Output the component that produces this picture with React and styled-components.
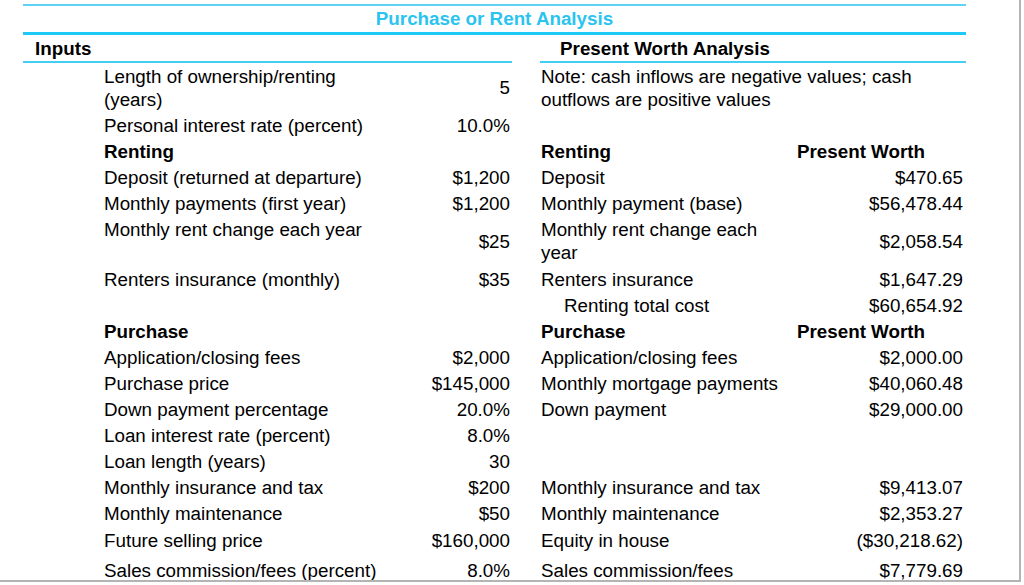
import React from "react";
import styled, { createGlobalStyle } from "styled-components";

const Global = createGlobalStyle`
  html, body { margin: 0; padding: 0; background: #ffffff; }
  body { font-family: "Liberation Sans", Arial, Helvetica, sans-serif; color: #000; }
`;

const COLS = "81px 282px 126px 28px 250px 176px";

const Frame = styled.div`
  box-sizing: border-box;
  width: 1021px;
  height: 582px;
  border-right: 2px solid #b4b4b4;
  border-bottom: 2px solid #b4b4b4;
  overflow: hidden;
  background: #fff;
`;

const Sheet = styled.div`
  margin-left: 23px;
  width: 943px;
  padding-top: 4px;
  font-size: 18.8px;
  line-height: 23px;
`;

const Rule = styled.div`
  height: ${(p) => p.$w}px;
  background: ${(p) => p.$c};
`;

const Title = styled.div`
  height: 26px;
  display: flex;
  align-items: center;
  justify-content: center;
  color: #2bc4f0;
  font-weight: bold;
  padding-bottom: 1px;
  box-sizing: border-box;
`;

const Row = styled.div`
  display: grid;
  grid-template-columns: ${COLS};
  height: ${(p) => p.$h}px;
  align-items: center;
`;

const HeaderRow = styled(Row)`
  align-items: stretch;
`;

const HeadCell = styled.div`
  display: flex;
  align-items: center;
  font-weight: bold;
  border-bottom: 2px solid #45cdf3;
`;

const InputsHead = styled(HeadCell)`
  grid-column: 1 / span 3;
  padding-left: 12px;
`;

const PwHead = styled(HeadCell)`
  grid-column: 5 / span 2;
  display: grid;
  grid-template-columns: 250px 1fr;
`;

const PwTitle = styled.span`
  text-align: center;
`;

const Label = styled.div`
  grid-column: 2;
  font-weight: ${(p) => (p.$bold ? "bold" : "normal")};
  align-self: ${(p) => (p.$top ? "start" : "center")};
  padding-top: ${(p) => (p.$top ? "2px" : "0")};
`;

const Value = styled.div`
  grid-column: 3;
  text-align: right;
  padding-right: 2px;
`;

const RLabel = styled.div`
  grid-column: 5;
  padding-left: ${(p) => (p.$indent ? "24px" : "1px")};
  font-weight: ${(p) => (p.$bold ? "bold" : "normal")};
`;

const RValue = styled.div`
  grid-column: 6;
  text-align: ${(p) => (p.$head ? "left" : "right")};
  padding-left: ${(p) => (p.$head ? "7px" : "0")};
  padding-right: 3px;
  font-weight: ${(p) => (p.$head ? "bold" : "normal")};
`;

const Note = styled.div`
  grid-column: 5 / span 2;
  padding-left: 1px;
  padding-right: 40px;
`;

const rows = [
  { h: 49, l: "Length of ownership/renting (years)", v: "5", note: "Note: cash inflows are negative values; cash outflows are positive values" },
  { h: 26, l: "Personal interest rate (percent)", v: "10.0%" },
  { h: 26, l: "Renting", lb: true, rl: "Renting", rlb: true, rv: "Present Worth", head: true },
  { h: 26, l: "Deposit (returned at departure)", v: "$1,200", rl: "Deposit", rv: "$470.65" },
  { h: 26, l: "Monthly payments (first year)", v: "$1,200", rl: "Monthly payment (base)", rv: "$56,478.44" },
  { h: 50, l: "Monthly rent change each year", top: true, v: "$25", rl: "Monthly rent change each year", rv: "$2,058.54" },
  { h: 26, l: "Renters insurance (monthly)", v: "$35", rl: "Renters insurance", rv: "$1,647.29" },
  { h: 26, rl: "Renting total cost", indent: true, rv: "$60,654.92" },
  { h: 26, l: "Purchase", lb: true, rl: "Purchase", rlb: true, rv: "Present Worth", head: true },
  { h: 26, l: "Application/closing fees", v: "$2,000", rl: "Application/closing fees", rv: "$2,000.00" },
  { h: 26, l: "Purchase price", v: "$145,000", rl: "Monthly mortgage payments", rv: "$40,060.48" },
  { h: 26, l: "Down payment percentage", v: "20.0%", rl: "Down payment", rv: "$29,000.00" },
  { h: 26, l: "Loan interest rate (percent)", v: "8.0%" },
  { h: 26, l: "Loan length (years)", v: "30" },
  { h: 26, l: "Monthly insurance and tax", v: "$200", rl: "Monthly insurance and tax", rv: "$9,413.07" },
  { h: 26, l: "Monthly maintenance", v: "$50", rl: "Monthly maintenance", rv: "$2,353.27" },
  { h: 28, l: "Future selling price", v: "$160,000", rl: "Equity in house", rv: "($30,218.62)" },
  { h: 32, l: "Sales commission/fees (percent)", v: "8.0%", rl: "Sales commission/fees", rv: "$7,779.69" },
];

export default function App() {
  return (
    <Frame>
      <Global />
      <Sheet>
        <Rule $w={2} $c="#5ed3f6" />
        <Title>Purchase or Rent Analysis</Title>
        <Rule $w={3} $c="#1ec8f7" />
        <HeaderRow $h={28}>
          <InputsHead>Inputs</InputsHead>
          <PwHead>
            <PwTitle>Present Worth Analysis</PwTitle>
          </PwHead>
        </HeaderRow>
        {rows.map((r, i) => (
          <Row key={i} $h={r.h}>
            {r.l && (
              <Label $bold={r.lb} $top={r.top}>
                {r.l}
              </Label>
            )}
            {r.v && <Value>{r.v}</Value>}
            {r.note && <Note>{r.note}</Note>}
            {r.rl && (
              <RLabel $bold={r.rlb} $indent={r.indent}>
                {r.rl}
              </RLabel>
            )}
            {r.rv && <RValue $head={r.head}>{r.rv}</RValue>}
          </Row>
        ))}
      </Sheet>
    </Frame>
  );
}
